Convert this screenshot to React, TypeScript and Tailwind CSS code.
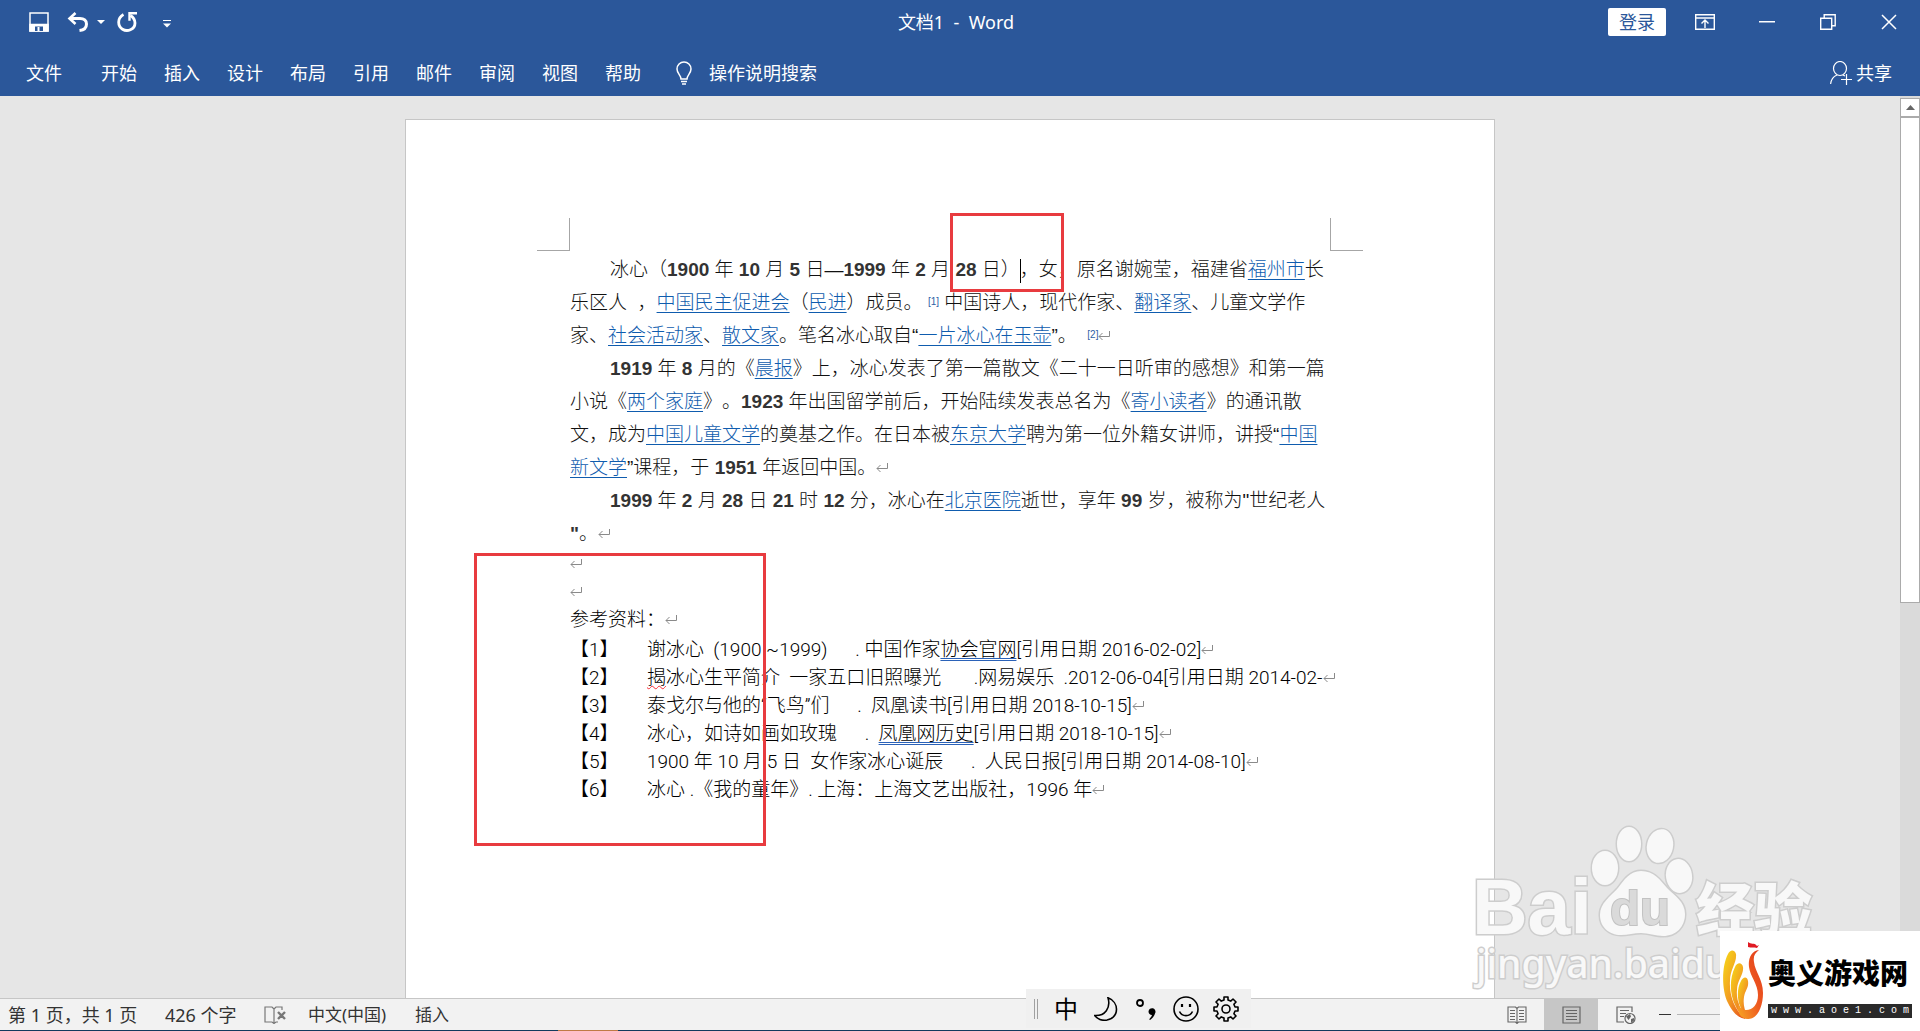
import { type ReactNode } from "react";

const tabs = ["开始", "插入", "设计", "布局", "引用", "邮件", "审阅", "视图", "帮助"];

function Return() {
  return (
    <svg className="inline-block h-3 w-3 align-baseline" viewBox="0 0 12 12" fill="none" stroke="#8a8a8a">
      <path d="M11.5 1v5.5H1M4.5 3L1 6.5L4.5 10" />
    </svg>
  );
}

function Link({ children }: { children: ReactNode }) {
  return (
    <a href="#" className="text-[#0f5cae] underline decoration-1 underline-offset-3">
      {children}
    </a>
  );
}

function Note({ n }: { n: number }) {
  return (
    <a href="#" className="relative -top-1 text-[10px] leading-none text-[#2e5fa5]">
      [{n}]
    </a>
  );
}

function Line({ indent, children }: { indent?: boolean; children: ReactNode }) {
  return <span className={indent ? "block pl-10" : "block"}>{children}</span>;
}

function Reference({ n, children }: { n: number; children: ReactNode }) {
  return (
    <li className="flex">
      <span className="w-[77px]">【{n}】</span>
      <span>
        {children}
        <Return />
      </span>
    </li>
  );
}

function Grammar({ children }: { children: ReactNode }) {
  return (
    <span className="underline decoration-[#2b62b8] decoration-double decoration-1 underline-offset-2">{children}</span>
  );
}

function Header() {
  return (
    <header className="h-24 shrink-0 bg-[#2b579a] text-lg text-white">
      <div className="grid h-11 grid-cols-[1fr_auto_1fr] items-center">
        <div className="flex items-center pl-[29px]">
          <button aria-label="保存">
            <svg className="h-5 w-5" viewBox="0 0 20 20" fill="none" stroke="currentColor" strokeWidth="1.5">
              <path d="M1 1h18v18H1z" />
              <path d="M1 12.500h18V19H1z" fill="currentColor" />
              <path d="M6 14.500h8V19H6z" fill="#2b579a" stroke="none" />
              <path d="M8.500 15h2v4h-2z" fill="currentColor" stroke="none" />
            </svg>
          </button>
          <button aria-label="撤消" className="ml-[18px]">
            <svg className="h-5 w-[22px]" viewBox="0 0 22 20" fill="none" stroke="currentColor" strokeWidth="3">
              <path d="M8.500 1L2.500 6.500L8.500 12" strokeWidth="2.600" />
              <path d="M3 6.500h10c4 0 6.500 2.200 6.500 5.500s-2.500 6-7 6.500" />
            </svg>
          </button>
          <button aria-label="撤消选项" className="ml-2">
            <svg className="h-1 w-2" viewBox="0 0 8 4" fill="currentColor">
              <path d="M0 0h8L4 4z" />
            </svg>
          </button>
          <button aria-label="重复" className="ml-3">
            <svg className="h-5 w-5" viewBox="0 0 20 20" fill="none" stroke="currentColor" strokeWidth="2.800">
              <path d="M6.500 2.500C0 6 .5 14 5.500 17.200C10 20 18 18 18 11C18 8 16.500 5.500 13.500 3.500" />
              <path d="M20 1.200h-7.500v7.500" strokeWidth="2.400" />
            </svg>
          </button>
          <button aria-label="自定义快速访问工具栏" className="ml-[26px] pt-1">
            <svg className="h-2 w-2" viewBox="0 0 8 8" fill="currentColor">
              <path d="M0 0h8v1H0zM0 3.500h8L4 7.500z" />
            </svg>
          </button>
        </div>
        <h1 className="pr-2 whitespace-pre">文档1  -  Word</h1>
        <div className="flex items-center justify-end pr-[23px]">
          <button className="h-7 rounded-xs bg-white px-[11px] leading-7 text-[#2b579a]">登录</button>
          <button aria-label="功能区显示选项" className="ml-[29px]">
            <svg className="h-4 w-5" viewBox="0 0 20 16" fill="none" stroke="currentColor" strokeWidth="1.400">
              <path d="M.7.7h18.600v14.600H.7zM.7 4h18.600M10 14V6.500M6.500 9.500L10 6l3.500 3.500" />
            </svg>
          </button>
          <button aria-label="最小化" className="ml-11">
            <svg className="h-4 w-4" viewBox="0 0 16 16" fill="currentColor">
              <path d="M0 7h16v1.500H0z" />
            </svg>
          </button>
          <button aria-label="还原" className="ml-[45px]">
            <svg className="h-4 w-4" viewBox="0 0 16 16" fill="none" stroke="currentColor" strokeWidth="1.400">
              <path d="M.7 4.200h11v11H.7zM4.200 4V.7h11v11h-3.300" />
            </svg>
          </button>
          <button aria-label="关闭" className="ml-[45px]">
            <svg className="h-4 w-4" viewBox="0 0 16 16" fill="none" stroke="currentColor" strokeWidth="1.500">
              <path d="M1 1l14 14M15 1L1 15" />
            </svg>
          </button>
        </div>
      </div>
      <nav className="flex h-13 items-center pt-1.5 pr-7 pl-[26px]">
        <button className="mr-[39px]">文件</button>
        <div className="flex gap-[27px]">
          {tabs.map((tab) => (
            <button key={tab}>{tab}</button>
          ))}
        </div>
        <button className="ml-[35px] flex items-center gap-[17px]">
          <svg className="h-6 w-4" viewBox="0 0 16 24" fill="none" stroke="currentColor" strokeWidth="1.500">
            <path d="M5 18c0-4-4-5.500-4-10a7 7 0 0 1 14 0c0 4.500-4 6-4 10zM5 20.500h6M6 23h4" />
          </svg>
          操作说明搜索
        </button>
        <button className="ml-auto flex items-center gap-1">
          <svg className="h-6 w-[22px]" viewBox="0 0 22 24" fill="none" stroke="currentColor" strokeWidth="1.200">
            <ellipse cx="10" cy="7.500" rx="6.500" ry="7" />
            <path d="M.6 23c.5-4.500 2.500-7.500 6.400-9M13 14l2 1M11 18.500h11M16.500 13v11" />
          </svg>
          共享
        </button>
      </nav>
    </header>
  );
}

function Page() {
  return (
    <article className="relative mx-auto mt-[23px] w-[1090px] shrink-0 self-stretch border border-b-0 border-[#c6c6c6] bg-white pt-[98px]">
      <div className="flex justify-between px-[131px]">
        <span className="h-[33px] w-[33px] border-r border-b border-[#a6a6a6]" />
        <span className="h-[33px] w-[33px] border-b border-l border-[#a6a6a6]" />
      </div>
      <div className="pt-0.5 pl-[164px] text-[19px] whitespace-pre [text-spacing-trim:space-all]">
        <div className="font-['Liberation_Sans','Noto_Sans_CJK_SC',sans-serif] leading-[33px] font-light text-[#111] [&_b]:font-bold [&_b]:text-[#333]">
          <p>
            <Line indent>
              冰心（<b>1900</b> 年 <b>10</b> 月 <b>5</b> 日—<b>1999</b> 年 <b>2</b> 月 <b>28</b> 日）
              <span className="-mr-px inline-block h-6 w-px bg-black align-middle" />，女，原名谢婉莹，福建省<Link>福州市</Link>长
            </Line>
            <Line>
              乐区人  ，<Link>中国民主促进会</Link>（<Link>民进</Link>）成员。 <Note n={1} /> 中国诗人，现代作家、<Link>翻译家</Link>、儿童文学作
            </Line>
            <Line>
              家、<Link>社会活动家</Link>、<Link>散文家</Link>。笔名冰心取自“<Link>一片冰心在玉壶</Link>”。  <Note n={2} />
              <Return />
            </Line>
          </p>
          <p>
            <Line indent>
              <b>1919</b> 年 <b>8</b> 月的《<Link>晨报</Link>》上，冰心发表了第一篇散文《二十一日听审的感想》和第一篇
            </Line>
            <Line>
              小说《<Link>两个家庭</Link>》。<b>1923</b> 年出国留学前后，开始陆续发表总名为《<Link>寄小读者</Link>》的通讯散
            </Line>
            <Line>
              文，成为<Link>中国儿童文学</Link>的奠基之作。在日本被<Link>东京大学</Link>聘为第一位外籍女讲师，讲授“<Link>中国</Link>
            </Line>
            <Line>
              <Link>新文学</Link>”课程，于 <b>1951</b> 年返回中国。
              <Return />
            </Line>
          </p>
          <p>
            <Line indent>
              <b>1999</b> 年 <b>2</b> 月 <b>28</b> 日 <b>21</b> 时 <b>12</b> 分，冰心在<Link>北京医院</Link>逝世，享年 <b>99</b> 岁，被称为"世纪老人
            </Line>
            <Line>
              <b>"</b>。<Return />
            </Line>
          </p>
        </div>
        <div className="font-['Roboto','Noto_Sans_CJK_SC',sans-serif] leading-7 font-light text-black">
          <p><Return /></p>
          <p><Return /></p>
          <p>参考资料：<Return /></p>
          <ol className="pt-0.5">
            <Reference n={1}>
              谢冰心  (1900 ~1999)      . 中国作家<Grammar>协会官网</Grammar>[引用日期 2016-02-02]
            </Reference>
            <Reference n={2}>
              <span className="underline decoration-red-500 decoration-wavy decoration-1">揭</span>
              冰心生平简介  一家五口旧照曝光       .网易娱乐  .2012-06-04[引用日期 2014-02-
            </Reference>
            <Reference n={3}>泰戈尔与他的“飞鸟”们      .  凤凰读书[引用日期 2018-10-15]</Reference>
            <Reference n={4}>
              冰心，如诗如画如玫瑰      .  <Grammar>凤凰网历史</Grammar>[引用日期 2018-10-15]
            </Reference>
            <Reference n={5}>1900 年 10 月 5 日  女作家冰心诞辰      .  人民日报[引用日期 2014-08-10]</Reference>
            <Reference n={6}>冰心 .《我的童年》. 上海：上海文艺出版社，1996 年</Reference>
          </ol>
        </div>
      </div>
      <div className="absolute top-[93px] left-[544px] h-[79px] w-[114px] border-3 border-[#e83b3f]" />
      <div className="absolute top-[433px] left-[68px] h-[293px] w-[292px] border-3 border-[#e83b3f]" />
    </article>
  );
}

function Scrollbar() {
  return (
    <div className="flex w-5 shrink-0 flex-col bg-[#dadada] pt-0.5">
      <button aria-label="向上滚动" className="flex h-[19px] items-center justify-center border border-[#ababab] bg-white">
        <svg className="h-[5px] w-[9px]" viewBox="0 0 9 5" fill="#666">
          <path d="M0 5h9L4.500 0z" />
        </svg>
      </button>
      <div className="h-[54%] border border-[#ababab] bg-white" />
    </div>
  );
}

function InputBar() {
  return (
    <div className="absolute bottom-[3px] left-[1026px] flex h-[39px] items-center bg-[#f0f0f0] pr-3 pl-2 text-black">
      <span className="h-5 w-1 border-x border-[#a0a0a0]" />
      <button className="ml-4 text-2xl leading-none">中</button>
      <button aria-label="半角" className="ml-4">
        <svg className="h-6 w-6" viewBox="0 0 24 24" fill="none" stroke="currentColor" strokeWidth="1.600">
          <path d="M14 .8C25 5 26 20 13 23C8 24 3 22 .8 18.500C11 19 17 11 14 .8z" />
        </svg>
      </button>
      <button aria-label="中文标点" className="ml-[18px]">
        <svg className="h-6 w-5" viewBox="0 0 20 24" fill="none" stroke="currentColor" strokeWidth="1.800">
          <circle cx="4" cy="6" r="3" />
          <path d="M12.500 14.500a3.500 3.500 0 1 1 6.500 2c-.8 3-3 5-5 6.500l-.8-.8c1.500-1.500 2.500-3 2.800-4.200c-2 0-3.500-1.500-3.500-3.500z" fill="currentColor" stroke="none" />
        </svg>
      </button>
      <button aria-label="表情" className="ml-[17px]">
        <svg className="h-[26px] w-[26px]" viewBox="0 0 26 26" fill="none" stroke="currentColor" strokeWidth="1.600">
          <circle cx="13" cy="13" r="12" />
          <path d="M6.500 15.500c2.500 5.500 10.500 5.500 13 0" />
          <path d="M9 8v3M17 8v3" strokeWidth="2.200" />
        </svg>
      </button>
      <button aria-label="设置" className="ml-[14px]">
        <svg className="h-[26px] w-[26px]" viewBox="0 0 26 26" fill="none" stroke="currentColor" strokeWidth="1.600" strokeLinejoin="round">
          <path d="M11 1h4v3l2.700 1.100L20 3l3 3-2.100 2.300L22 11h3v4h-3l-1.100 2.700L23 20l-3 3-2.300-2.100L15 22v3h-4v-3l-2.700-1.100L6 23l-3-3 2.100-2.300L4 15H1v-4h3l1.100-2.700L3 6l3-3 2.300 2.100L11 4z" />
          <circle cx="13" cy="13" r="4" />
        </svg>
      </button>
    </div>
  );
}

function StatusBar() {
  return (
    <footer className="relative shrink-0 border-t border-[#c6c6c6] bg-[#f2f2f2] text-[#333]">
      <div className="flex h-[31px] items-center pl-2 text-[17px] whitespace-nowrap">
        <span className="w-[157px] text-lg">第 1 页，共 1 页</span>
        <span className="w-[99px] text-lg">426 个字</span>
        <button aria-label="校对" className="w-11">
          <svg className="h-[18px] w-[22px]" viewBox="0 0 22 18" fill="none" stroke="#777" strokeWidth="1.200">
            <path d="M10 3L8 1H1v15h7l2 1.500L12 16h2M10 3v14.500M10 3l2-2h6v3" />
            <path d="M14 6l7 7M21 6l-7 7" strokeWidth="2.400" />
          </svg>
        </button>
        <span className="w-[107px]">中文(中国)</span>
        <span>插入</span>
        <div className="ml-auto flex h-full items-center">
          <button aria-label="阅读视图" className="mr-[17px]">
            <svg className="h-[18px] w-5" viewBox="0 0 20 18" fill="none" stroke="#666" strokeWidth="1.100">
              <path d="M10 2.500L8.500 1H1v15h7.500l1.500 1.500l1.500-1.500H19V1h-7.500zM10 2.500v15M3 4.500h5M3 7.500h5M3 10.500h5M3 13.500h5M12 4.500h5M12 7.500h5M12 10.500h5M12 13.500h5" />
            </svg>
          </button>
          <button aria-label="页面视图" className="flex h-full w-[54px] items-center justify-center bg-[#c6c6c6]">
            <svg className="h-[18px] w-[19px]" viewBox="0 0 19 18" fill="none" stroke="#666" strokeWidth="1.200">
              <path d="M1 1h17v16H1zM4 4.500h11M4 7.500h11M4 10.500h11M4 13.500h11" />
            </svg>
          </button>
          <button aria-label="Web 版式视图" className="ml-[18px]">
            <svg className="h-[18px] w-5" viewBox="0 0 20 18" fill="none" stroke="#666" strokeWidth="1.200">
              <path d="M8 16H1V1h15v5M4 4.500h9M4 7.500h6M4 10.500h4" />
              <circle cx="14" cy="12.500" r="5" />
              <path d="M10 10.500l4-2.500 1 2.500-2.500 3.500zM15 13l3-1v2.500l-3 2.500z" fill="#666" stroke="none" />
            </svg>
          </button>
          <button aria-label="缩小" className="mr-1.5 ml-[23px]">
            <span className="block h-px w-3 bg-[#333]" />
          </button>
          <input type="range" aria-label="缩放" className="h-px w-[243px] appearance-none bg-[#b5b5b5]" />
        </div>
      </div>
      <div className="flex h-px bg-[#123a5e]">
        <span className="ml-[558px] w-[60px] bg-[#c07a45]" />
      </div>
      <InputBar />
    </footer>
  );
}

function BaiduMark() {
  return (
    <svg
      className="pointer-events-none absolute right-[100px] bottom-5 h-[190px] w-[350px]"
      viewBox="1470 821 350 190"
      fill="#f8f8f8"
      stroke="#cdcdcd"
      strokeWidth="3"
      paintOrder="stroke"
    >
      <text x="1472" y="934" fontFamily="Liberation Sans" fontWeight="700" fontSize="77">Bai</text>
      <ellipse cx="1605" cy="868" rx="13" ry="17" />
      <ellipse cx="1629" cy="844" rx="12" ry="17" />
      <ellipse cx="1660" cy="846" rx="13" ry="17" transform="rotate(12 1660 846)" />
      <ellipse cx="1679" cy="876" rx="13" ry="17" transform="rotate(-8 1679 876)" />
      <path d="M1641 871c-11 0-17 9-23 17c-8 9-18 15-18 27c0 12 9 20 21 20c7 0 13-2 20-2s15 3 22 3c13 0 22-9 22-22c0-12-10-18-18-26c-7-8-13-17-26-17z" />
      <text x="1610" y="925" fill="#dadada" stroke="#c2c2c2" strokeWidth="2" fontFamily="Liberation Sans" fontWeight="700" fontSize="49">du</text>
      <text x="1696" y="931" fontFamily="Noto Sans CJK SC" fontWeight="900" fontSize="58">经验</text>
      <text x="1476" y="978" fontFamily="Noto Sans" fontWeight="500" fontSize="39">jingyan.baidu</text>
    </svg>
  );
}

function SiteBadge() {
  return (
    <div className="absolute right-0 bottom-0 flex h-[100px] w-[200px] items-center gap-1 bg-white pl-[3px]">
      <svg className="h-20 w-[41px] shrink-0" viewBox="0 0 41 80">
        <defs>
          <linearGradient id="flame" x1="0" x2="1" y1="0" y2="1">
            <stop offset="0" stopColor="#f6dc18" />
            <stop offset=".5" stopColor="#f29a22" />
            <stop offset="1" stopColor="#e4471d" />
          </linearGradient>
          <linearGradient id="body" x1="0" x2="1" y1="1" y2="0">
            <stop offset="0" stopColor="#f7a823" />
            <stop offset=".5" stopColor="#ee5a20" />
            <stop offset="1" stopColor="#e03a1c" />
          </linearGradient>
        </defs>
        <path d="M13 13c-2-5-6-4-8 0C-1 24-2 48 5 62c4 8 9 15 18 16C12 70 6 55 7 40c0-12 7-18 6-27z" fill="url(#flame)" />
        <path d="M20 26c-1-5-6-5-8 0c-6 12-5 28 0 38c3 7 7 12 13 14c-8-9-12-19-11-29c0-10 7-15 6-23z" fill="url(#flame)" />
        <path d="M25 40c-1-5-5-4-7 0c-4 7-4 18-1 25c2 6 5 10 9 13c-5-9-6-15-5-22c1-7 5-9 4-16z" fill="url(#flame)" />
        <path d="M36 9c-8 1-11 9-10 17c1 9 9 17 9 28c0 9-5 15-12 15c-6 0-8-4-7-9c-3 10 1 18 9 18c10 0 15-13 15-26c0-14-8-21-9-31c-1-6 1-9 5-12z" fill="url(#body)" />
        <path d="M25 1c3 3 6 0 9 4l2-1-2 3c-3-1-6 0-9-1z" fill="#e01b24" />
      </svg>
      <div className="w-[144px] font-['Noto_Sans_CJK_SC',sans-serif] text-[28px] leading-[56px] font-black whitespace-nowrap text-black">
        奥义游戏网
        <a href="#" className="mt-1 block bg-[#2a2a2a] text-center font-['Liberation_Mono',monospace] text-[10px] leading-[14px] font-normal text-white">
          w w w . a o e 1 . c o m
        </a>
      </div>
    </div>
  );
}

export default function App() {
  return (
    <div
      lang="zh-CN"
      className="relative flex h-screen flex-col overflow-hidden bg-[#e6e6e6] font-['Noto_Sans','Noto_Sans_CJK_SC',sans-serif]"
    >
      <Header />
      <main className="flex min-h-0 flex-1 overflow-hidden">
        <Page />
        <Scrollbar />
      </main>
      <StatusBar />
      <BaiduMark />
      <SiteBadge />
    </div>
  );
}
